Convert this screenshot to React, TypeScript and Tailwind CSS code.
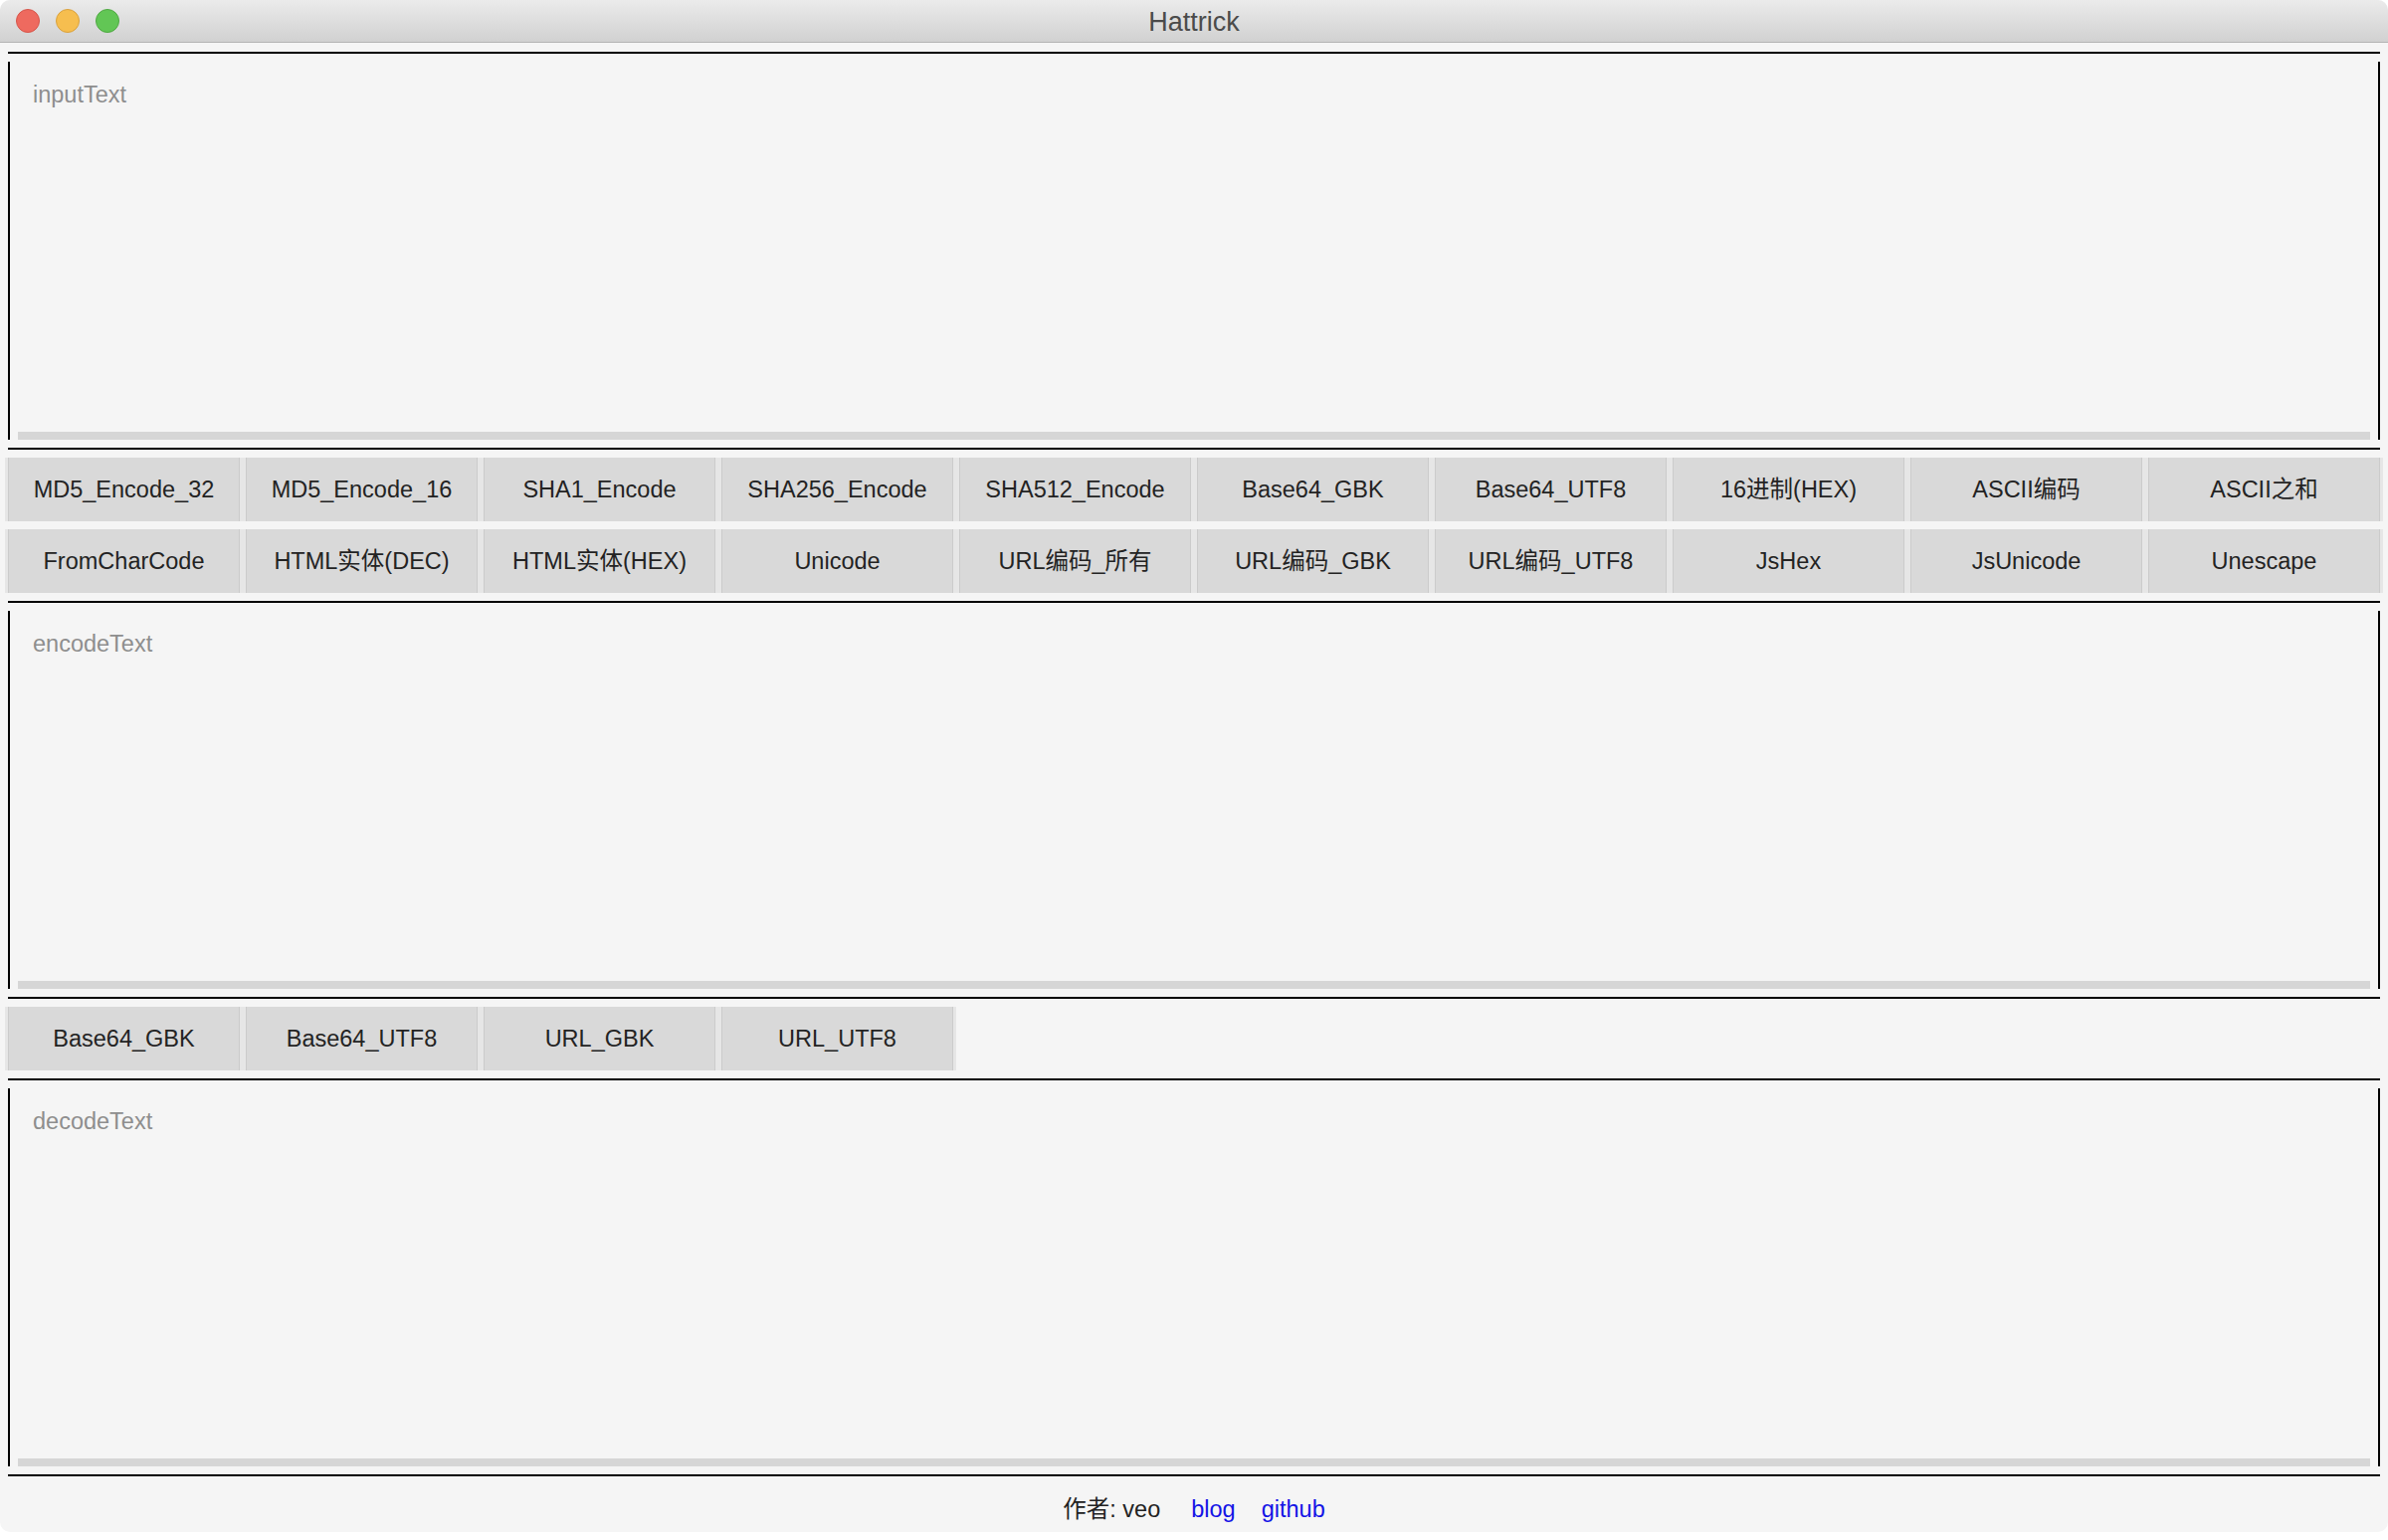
const encodeButtons = [
  "MD5_Encode_32",
  "MD5_Encode_16",
  "SHA1_Encode",
  "SHA256_Encode",
  "SHA512_Encode",
  "Base64_GBK",
  "Base64_UTF8",
  "16进制(HEX)",
  "ASCII编码",
  "ASCII之和",
  "FromCharCode",
  "HTML实体(DEC)",
  "HTML实体(HEX)",
  "Unicode",
  "URL编码_所有",
  "URL编码_GBK",
  "URL编码_UTF8",
  "JsHex",
  "JsUnicode",
  "Unescape",
];

const decodeButtons = ["Base64_GBK", "Base64_UTF8", "URL_GBK", "URL_UTF8"];

function Rule() {
  return <div className="h-[2px] bg-black" />;
}

function TextPanel({ placeholder }: { placeholder: string }) {
  return (
    <div className="h-[380px] border-x-2 border-black flex flex-col justify-between">
      <p className="pl-[23px] pt-[19px] text-[23.5px] leading-[28px] text-[#8e8e8e]">
        {placeholder}
      </p>
      <div className="mx-[8px] h-[8px] bg-[#d6d6d6]" />
    </div>
  );
}

function ActionButton({ label }: { label: string }) {
  return (
    <button className="h-[64px] bg-[#d9d9d9] shadow-[inset_1px_0_0_#cbcbcb,inset_-1px_0_0_#cbcbcb,3px_0_0_#e6e6e6,-3px_0_0_#e6e6e6] text-[23.5px] leading-[28px] text-[#232323] flex items-center justify-center whitespace-nowrap">
      {label}
    </button>
  );
}

function TitleBar() {
  return (
    <div className="relative h-[43px] shrink-0 border-b border-[#b3b3b3] bg-gradient-to-b from-[#ebebeb] to-[#d1d1d1] flex items-center">
      <div className="flex items-center gap-[16px] pl-[16px]">
        <span className="w-[24px] h-[24px] rounded-full bg-[#ee6a5f] border border-[#d6554a]" />
        <span className="w-[24px] h-[24px] rounded-full bg-[#f6be4f] border border-[#d9a13d]" />
        <span className="w-[24px] h-[24px] rounded-full bg-[#62c655] border border-[#4fa842]" />
      </div>
      <div className="absolute inset-0 flex items-center justify-center pt-[2px] pointer-events-none">
        <span className="text-[27px] leading-[30px] text-[#4b4b4b]">Hattrick</span>
      </div>
    </div>
  );
}

export default function App() {
  return (
    <div className="min-h-screen w-full bg-white font-['Liberation_Sans','Noto_Sans_CJK_SC',sans-serif]">
      <div className="h-[1540px] rounded-[10px] overflow-hidden bg-[#f5f5f5] flex flex-col">
        <TitleBar />
        <div className="flex flex-col gap-[8px] px-[8px] pt-[9px]">
          <Rule />
          <TextPanel placeholder="inputText" />
          <Rule />
          <div className="grid grid-cols-10 gap-x-[6px] gap-y-[8px]">
            {encodeButtons.map((b) => (
              <ActionButton key={b} label={b} />
            ))}
          </div>
          <Rule />
          <TextPanel placeholder="encodeText" />
          <Rule />
          <div className="grid grid-cols-10 gap-x-[6px]">
            {decodeButtons.map((b) => (
              <ActionButton key={b} label={b} />
            ))}
          </div>
          <Rule />
          <TextPanel placeholder="decodeText" />
          <Rule />
        </div>
        <div className="flex justify-center pt-[19px] text-[23.5px] leading-[28px]">
          <span className="text-[#222]">作者: veo</span>
          <a className="ml-[31px] text-[#1414e6]">blog</a>
          <a className="ml-[26px] text-[#1414e6]">github</a>
        </div>
      </div>
    </div>
  );
}
